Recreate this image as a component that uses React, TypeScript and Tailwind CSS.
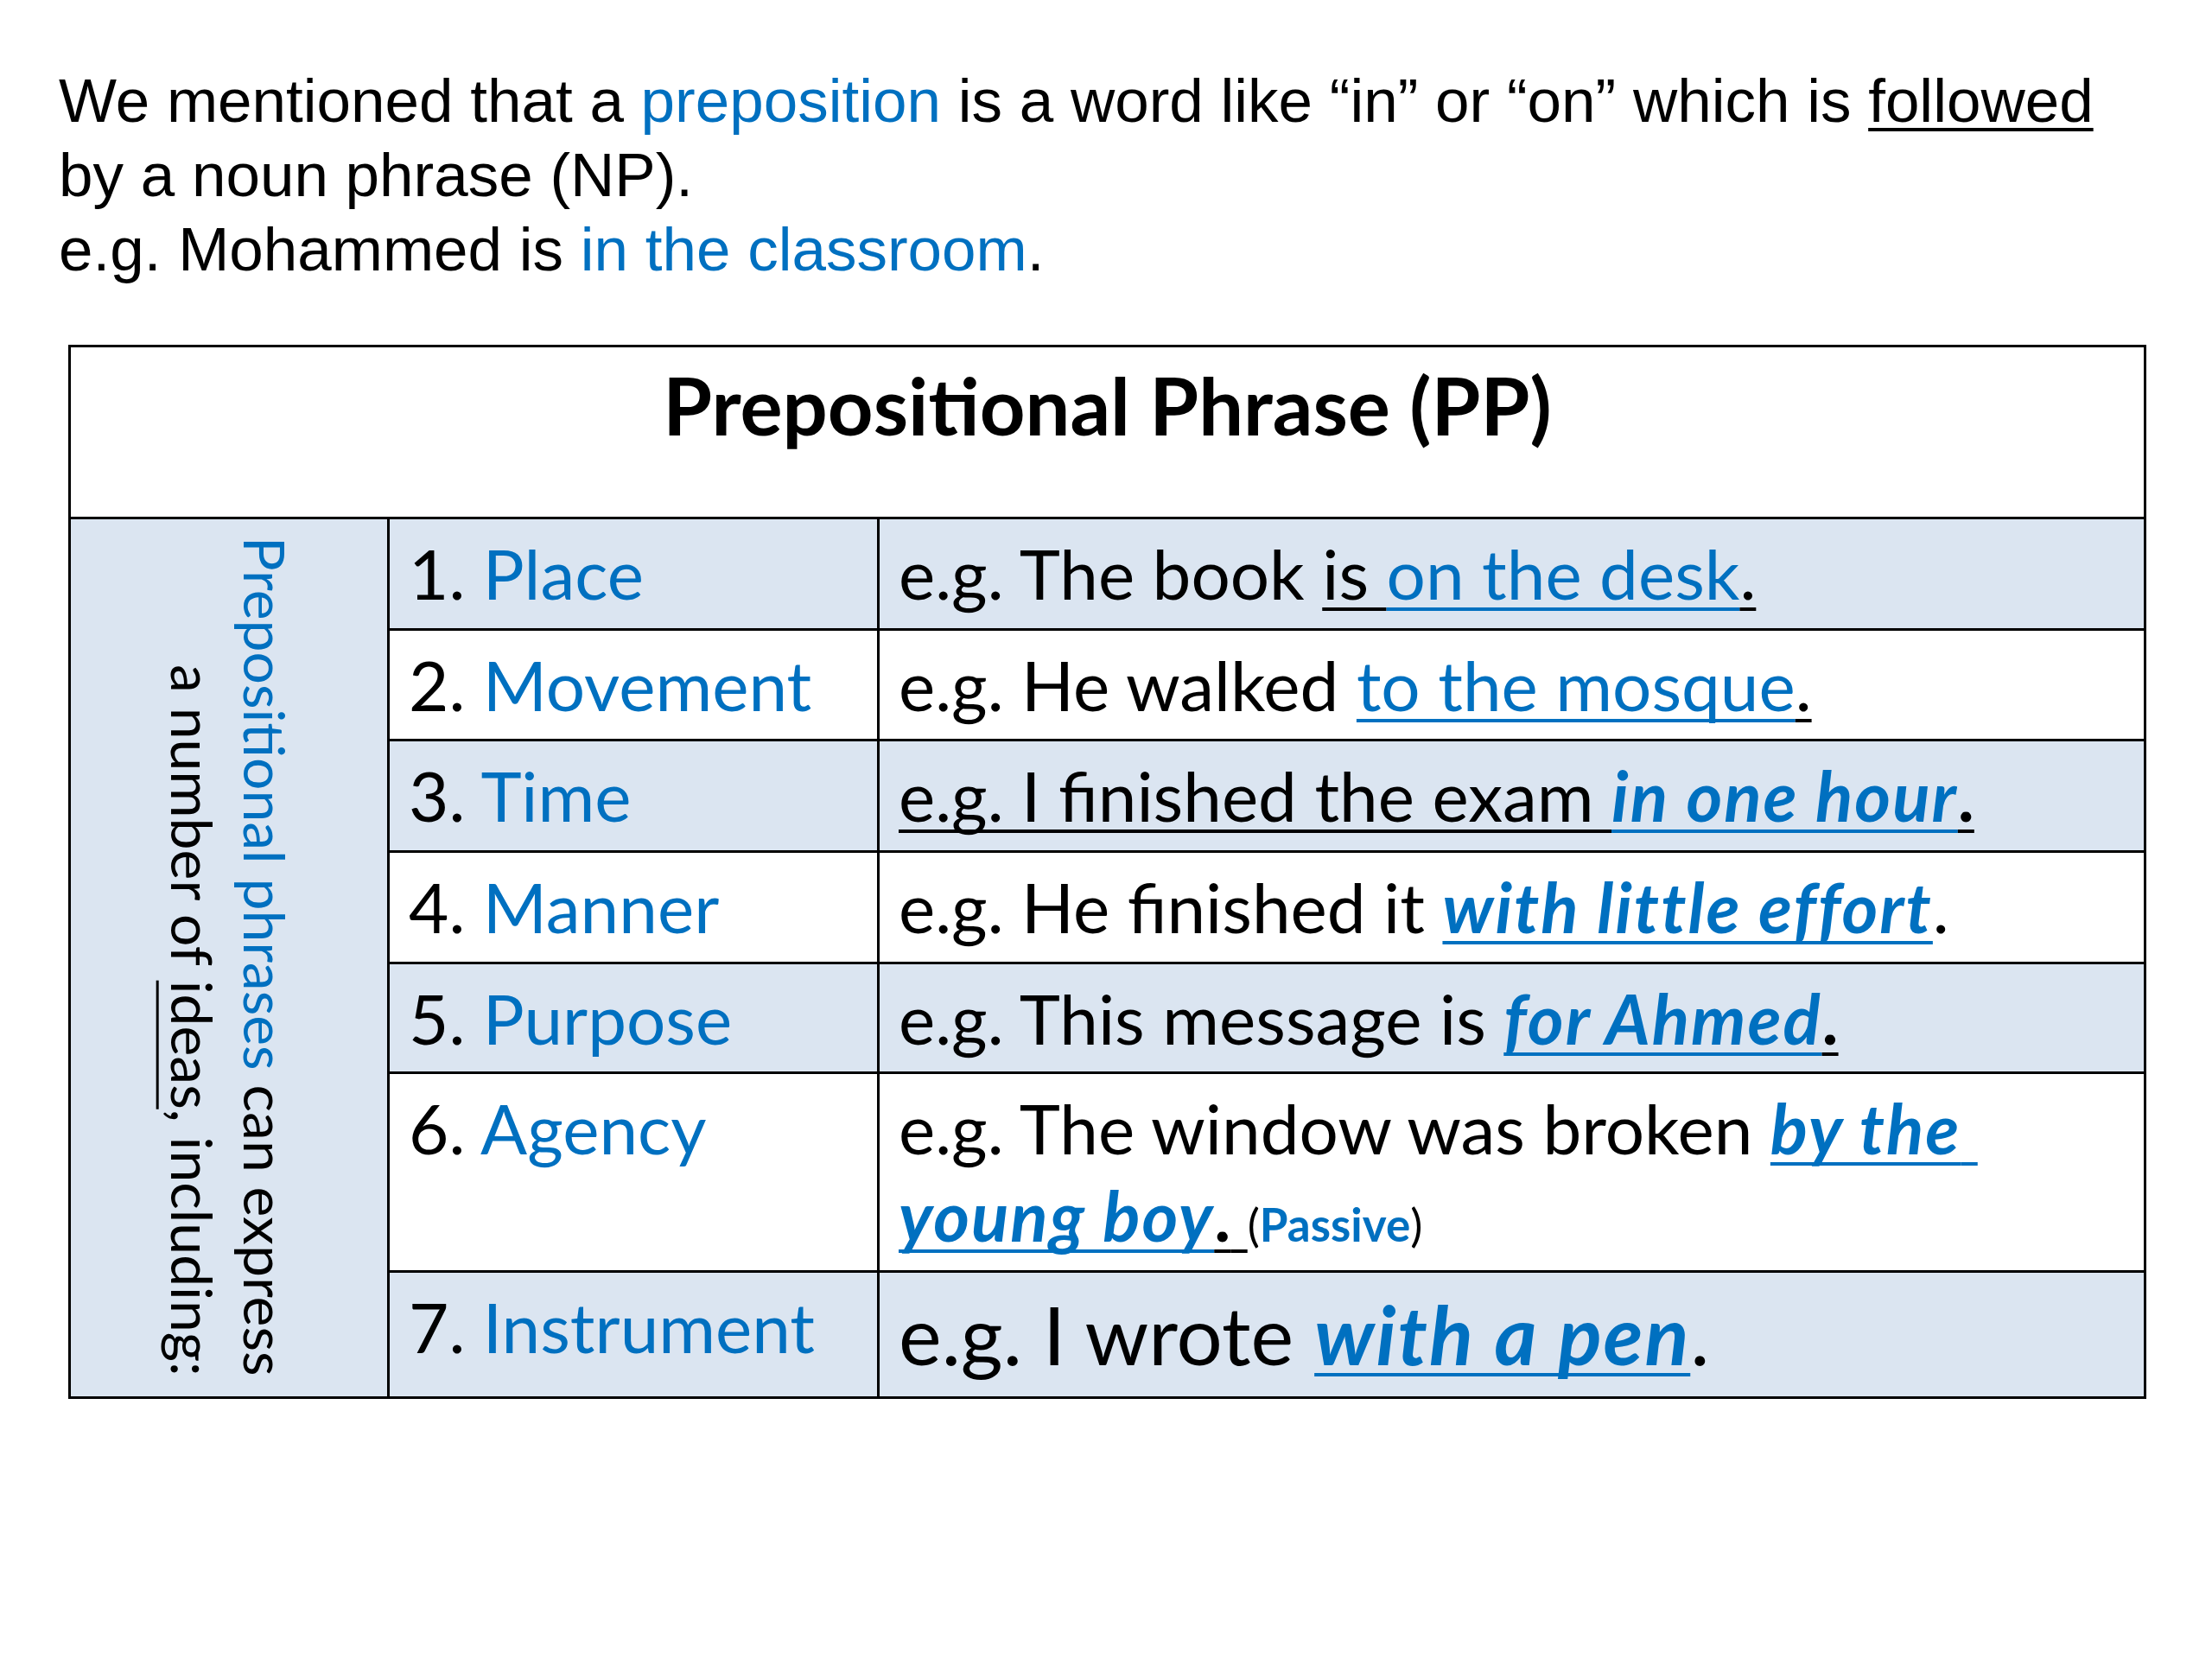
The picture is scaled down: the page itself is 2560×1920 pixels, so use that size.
import React from "react";

function U({ children, className = "" }: { children: React.ReactNode; className?: string }) {
  return (
    <span
      className={`underline decoration-[4px] underline-offset-[9px] [text-decoration-skip-ink:none] ${className}`}
    >
      {children}
    </span>
  );
}

const BLUE = "text-[#0070c0]";
const PP = "font-bold italic tracking-[2px] text-[#0070c0]";

type Row = { num: string; label: string; example: React.ReactNode; big?: boolean };

const rows: Row[] = [
  {
    num: "1.",
    label: "Place",
    example: (
      <>
        e.g. The book <U>is </U>
        <U className={BLUE}>on the desk</U>
        <U>.</U>
      </>
    ),
  },
  {
    num: "2.",
    label: "Movement",
    example: (
      <>
        e.g. He walked <U className={BLUE}>to the mosque</U>
        <U>.</U>
      </>
    ),
  },
  {
    num: "3.",
    label: "Time",
    example: (
      <>
        <U>e.g. I finished the exam </U>
        <U className={PP}>in one hour</U>
        <U className="font-bold">.</U>
      </>
    ),
  },
  {
    num: "4.",
    label: "Manner",
    example: (
      <>
        e.g. He finished it <U className={PP}>with little effort</U>.
      </>
    ),
  },
  {
    num: "5.",
    label: "Purpose",
    example: (
      <>
        e.g. This message is <U className={PP}>for Ahmed</U>
        <U className="font-bold">.</U>
      </>
    ),
  },
  {
    num: "6.",
    label: "Agency",
    example: (
      <>
        e.g. The window was broken <U className={PP}>by the{"\u00a0"}</U>
        <br />
        <U className={PP}>young boy</U>
        <U className="font-bold">.{"\u00a0"}</U>
        <span className="text-[53px]">
          (<span className="font-bold text-[#0070c0]">Passive</span>)
        </span>
      </>
    ),
  },
  {
    num: "7.",
    label: "Instrument",
    big: true,
    example: (
      <>
        e.g. I wrote <U className={PP}>with a pen</U>.
      </>
    ),
  },
];

export default function App() {
  return (
    <div className="w-[2560px] h-[1920px] bg-white text-black">
      {/* Intro text */}
      <p className="pt-[74px] pl-[68px] font-['Liberation_Sans',Arial,sans-serif] text-[71px] leading-[86px] whitespace-nowrap">
        We mentioned that a <span className={BLUE}>preposition</span> is a word like “in” or “on” which is{" "}
        <span className="underline decoration-[4px] underline-offset-[7px] [text-decoration-skip-ink:none]">followed</span>
        <br />
        by a noun phrase (NP).
        <br />
        e.g. Mohammed is <span className={BLUE}>in the classroom</span>.
      </p>

      {/* Table */}
      <div className="mt-[67px] ml-[79px] w-[2405px] grid grid-cols-[366px_567px_1466px] grid-rows-[196px_129px_128px_129px_129px_127px_230px_146px] border-[3px] border-black font-[Lato,sans-serif] text-black">
        <div className="col-span-3 pt-[12px] text-center font-bold text-[92px] leading-[1.2]">
          Prepositional Phrase (PP)
        </div>

        <div className="row-span-7 flex justify-center bg-[#dbe5f1] border-t-[3px] border-black">
          <div className="[writing-mode:vertical-rl] text-end pb-[23px] text-[66px] leading-[84px] whitespace-nowrap">
            <span className={BLUE}>Prepositional phrases</span> can express
            <br />a number of{" "}
            <span className="underline decoration-[3px] underline-offset-[6px] [text-decoration-skip-ink:none] [text-underline-position:under_left]">
              ideas
            </span>
            , including:
          </div>
        </div>

        {rows.map((r, i) => {
          const shade = i % 2 === 0 ? "bg-[#dbe5f1]" : "bg-white";
          return (
            <React.Fragment key={r.num}>
              <div className={`${shade} border-t-[3px] border-l-[3px] border-black pl-[22px] pt-[12px] text-[80px] leading-[101px] whitespace-nowrap`}>
                {r.num} <span className={BLUE}>{r.label}</span>
              </div>
              <div className={`${shade} border-t-[3px] border-l-[3px] border-black pl-[22px] whitespace-nowrap`}>
                {r.big ? (
                  <div className="pt-[17px] text-[94px] leading-[107px]">{r.example}</div>
                ) : (
                  <div className="pt-[12px] text-[80px] leading-[101px]">{r.example}</div>
                )}
              </div>
            </React.Fragment>
          );
        })}
      </div>
    </div>
  );
}
